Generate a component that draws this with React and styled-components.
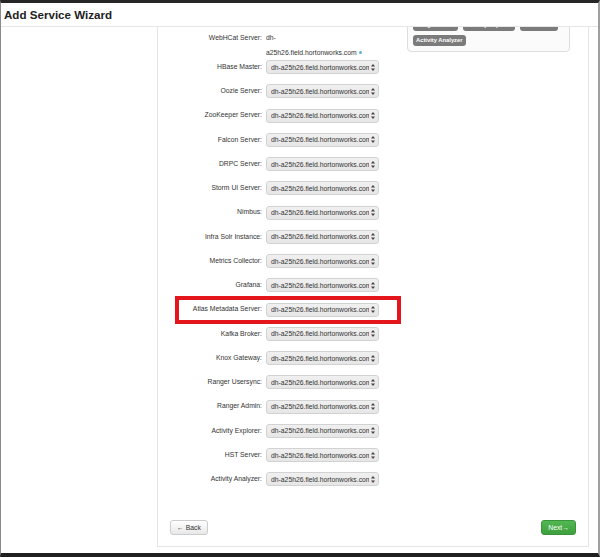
import React from 'react'
import styled, { createGlobalStyle } from 'styled-components'

const hosts = 'dh-a25h26.field.hortonworks.com'

const masters = [
  'HBase Master:',
  'Oozie Server:',
  'ZooKeeper Server:',
  'Falcon Server:',
  'DRPC Server:',
  'Storm UI Server:',
  'Nimbus:',
  'Infra Solr Instance:',
  'Metrics Collector:',
  'Grafana:',
  'Atlas Metadata Server:',
  'Kafka Broker:',
  'Knox Gateway:',
  'Ranger Usersync:',
  'Ranger Admin:',
  'Activity Explorer:',
  'HST Server:',
  'Activity Analyzer:',
]

const tags = ['Ranger Admin', 'Activity Explorer', 'HST Server', 'Activity Analyzer']

//icons
const UpDown = () => (
  <svg width='4' height='7' viewBox='0 0 4 7'>
    <path d='M2 0 L4 2.6 L0 2.6 Z' fill='#444' />
    <path d='M2 7 L4 4.4 L0 4.4 Z' fill='#444' />
  </svg>
)

const App = () => {
  return (
    <>
      <GlobalStyle />
      <Frame>
        <Header>
          <h1>Add Service Wizard</h1>
        </Header>

        <Content>
          <Sidebar />

          <Panel>
            <Top>
              <Form>
                <Row static>
                  <Label>WebHCat Server:</Label>
                  <Value>
                    {hosts}<Dot />
                  </Value>
                </Row>

                {masters.map((m, i) => (
                  <Row key={i} highlight={m === 'Atlas Metadata Server:'}>
                    <Label>{m}</Label>
                    <Select>
                      <span>{hosts}</span>
                      <UpDown />
                    </Select>
                  </Row>
                ))}
              </Form>

              <HostBox>
                {tags.map(t => <Tag key={t}>{t}</Tag>)}
              </HostBox>
            </Top>

            <Footer>
              <Button>← Back</Button>
              <Button primary>Next→</Button>
            </Footer>
          </Panel>
        </Content>
      </Frame>
    </>
  )
}

const GlobalStyle = createGlobalStyle`
* { box-sizing: border-box; }

body {
  margin: 0;
  font-family: "Liberation Sans", Arial, sans-serif;
  background: #fff;
}
`

const Frame = styled.div`
width: 600px;
height: 557px;
display: flex;
flex-direction: column;
overflow: hidden;
background: #fff;
border-top: 3px solid #262626;
border-bottom: 4px solid #1f1f1f;
border-left: 1px solid #8a8a8a;
border-right: 2px solid #a0a0a0;
`

const Header = styled.div`
position: relative;
z-index: 1;
height: 24px;
flex-shrink: 0;
background: #fff;
border-bottom: 1px solid #e6e6e6;
padding-left: 3px;
display: flex;
align-items: center;

h1 {
  margin: 0;
  font-size: 11.6px;
  font-weight: bold;
  color: #222;
}
`

const Content = styled.div`
flex: 1;
min-height: 0;
display: flex;
margin-top: -21px;
`

const Sidebar = styled.div`
width: 156px;
flex-shrink: 0;
`

const Panel = styled.div`
width: 432px;
margin-bottom: 6px;
border: 1px solid #e4e4e4;
padding: 7px 12px 11px 12px;
display: flex;
flex-direction: column;
`

const Top = styled.div`
display: flex;
justify-content: space-between;
align-items: flex-start;
`

const Form = styled.div`
padding: 17px 0 0 12px;
display: flex;
flex-direction: column;
`

const Row = styled.div`
width: 212px;
display: flex;
align-items: ${p => (p.static ? 'flex-start' : 'center')};
gap: 4px;
height: ${p => (p.static ? '29px' : '14px')};
margin-top: ${p => (p.static ? '0' : '10.25px')};
outline: ${p => (p.highlight ? '4px solid #e5151c' : 'none')};
outline-offset: 3px;

&:nth-child(2) { margin-top: 0; }
`

const Label = styled.div`
width: 80px;
flex-shrink: 0;
text-align: right;
font-size: 6.8px;
line-height: 14.5px;
color: #333;
white-space: nowrap;
`

const Value = styled.div`
width: 100px;
font-size: 6.8px;
line-height: 14.5px;
color: #333;
`

const Dot = styled.span`
display: inline-block;
width: 3px;
height: 3px;
margin-left: 2px;
border-radius: 50%;
background: #62b0d8;
vertical-align: middle;
`

const Select = styled.div`
width: 113px;
height: 14px;
display: flex;
align-items: center;
gap: 2px;
padding: 0 3px 0 4px;
border: 1px solid #d2d2d2;
border-radius: 3px;
background: linear-gradient(#f0f0f0, #e6e6e6);

span {
  flex: 1;
  overflow: hidden;
  white-space: nowrap;
  font-size: 6.8px;
  color: #333;
}

svg { flex-shrink: 0; }
`

const HostBox = styled.div`
width: 163px;
margin-right: 6px;
padding: 5px;
border: 1px solid #dedede;
border-radius: 4px;
background: #fbfbfb;
display: flex;
flex-wrap: wrap;
gap: 4px 5px;
`

const Tag = styled.span`
height: 11px;
padding: 0 3px;
border-radius: 3px;
background: #7b7b7b;
color: #fff;
font-size: 5.8px;
font-weight: bold;
line-height: 11px;
white-space: nowrap;
`

const Footer = styled.div`
margin-top: auto;
display: flex;
justify-content: space-between;
align-items: center;
`

const Button = styled.div`
height: 15px;
padding: 0 6px;
display: flex;
align-items: center;
font-size: 6.8px;
border-radius: 3px;
color: ${p => (p.primary ? '#fff' : '#333')};
border: 1px solid ${p => (p.primary ? '#3a943a' : '#cccccc')};
background: ${p => (p.primary
  ? 'linear-gradient(#52b852, #3d9f3d)'
  : 'linear-gradient(#ffffff, #e8e8e8)')};
`

export default App
